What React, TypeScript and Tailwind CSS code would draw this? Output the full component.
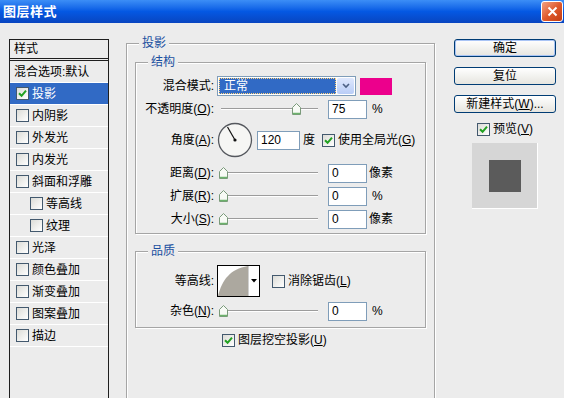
import { ReactNode } from 'react';

const font = "font-['Liberation_Sans','Noto_Sans_CJK_SC',sans-serif]";

function Check({ on }: { on?: boolean }) {
  return (
    <span className="inline-flex h-[13px] w-[13px] shrink-0 items-center justify-center border border-[#43596e] bg-linear-to-br from-[#dcdcd7] to-white">
      {on && (
        <svg width="9" height="9" viewBox="0 0 9 9">
          <path d="M1 4.2 L3.6 6.8 L8 1.6" stroke="#21a121" strokeWidth="2" fill="none" />
        </svg>
      )}
    </span>
  );
}

function Slider({ value }: { value: number }) {
  return (
    <div className="relative h-[20px] w-[108px]">
      <div className="absolute left-[4px] top-[9px] h-[2px] w-[97px] border-t border-[#9c9c9c] border-b border-b-white" />
      <svg
        className="absolute top-[4px]"
        style={{ left: 2 + value * 0.97 }}
        width="9"
        height="12"
        viewBox="0 0 9 12"
      >
        <path d="M4.5 0.5 L8.5 4.5 L8.5 11.5 L0.5 11.5 L0.5 4.5 Z" fill="#f7faf5" stroke="#7a9a7a" />
        <path d="M1 10.5 H8" stroke="#6cb26c" strokeWidth="1.5" />
      </svg>
    </div>
  );
}

function Field({ value, w = 39 }: { value: string; w?: number }) {
  return (
    <div
      className="flex h-[19px] items-center border border-[#7f9db9] bg-white pl-[3px] text-[12px]"
      style={{ width: w }}
    >
      {value}
    </div>
  );
}

function Label({ children }: { children: ReactNode }) {
  return <div className="w-[78px] shrink-0 text-right text-[12px] leading-none">{children}</div>;
}

function Group({ title, className, children }: { title: string; className: string; children: ReactNode }) {
  return (
    <div className={`relative border border-[#a5a5a5] shadow-[inset_1px_1px_0_#fff,1px_1px_0_#fff] ${className}`}>
      <span className="absolute -top-[9px] left-[12px] bg-[#ececec] px-[3px] text-[12px] leading-[16px] text-[#1a4f9f]">
        {title}
      </span>
      {children}
    </div>
  );
}

const styles = [
  { name: '内阴影' },
  { name: '外发光' },
  { name: '内发光' },
  { name: '斜面和浮雕' },
  { name: '等高线', indent: true },
  { name: '纹理', indent: true },
  { name: '光泽' },
  { name: '颜色叠加' },
  { name: '渐变叠加' },
  { name: '图案叠加' },
  { name: '描边' },
];

function XpButton({ children, def }: { children: ReactNode; def?: boolean }) {
  return (
    <div
      className={`flex h-[18px] w-[102px] items-center justify-center rounded-[3px] border border-[#003c74] bg-linear-to-b from-white to-[#e6e5df] text-[12px] ${
        def ? 'shadow-[inset_0_0_0_1px_#a9c4f5]' : ''
      }`}
    >
      {children}
    </div>
  );
}

export default function App() {
  return (
    <div className={`h-[398px] w-[564px] overflow-hidden bg-[#ececec] text-black [text-autospace:no-autospace] ${font}`}>
      {/* Title bar */}
      <div className="flex h-[23px] items-center justify-between bg-linear-to-b from-[#3c8ef6] via-[#0458e3] to-[#0845c0] pl-[3px] pr-[1px]">
        <span className="text-[13px] font-bold tracking-[0.5px] text-white">图层样式</span>
        <div className="flex h-[21px] w-[22px] items-center justify-center rounded-[3px] border border-white bg-linear-to-br from-[#f0a080] via-[#e05a2c] to-[#c33d12]">
          <svg width="11" height="11" viewBox="0 0 11 11">
            <path d="M1.5 1.5 L9.5 9.5 M9.5 1.5 L1.5 9.5" stroke="white" strokeWidth="2" />
          </svg>
        </div>
      </div>

      <div className="flex">
        {/* Style list */}
        <div className="ml-[9px] mt-[16px] h-[370px] w-[100px] shrink-0 border border-[#1e1e1e] text-[12px]">
          <div className="flex h-[21px] items-center border-b-[3px] border-double border-[#1e1e1e] pl-[4px]">样式</div>
          <div className="flex h-[22px] items-center border-b border-white pl-[4px]">混合选项:默认</div>
          <div className="flex h-[22px] items-center gap-[3px] border-b border-white bg-[#316ac5] pl-[6px] text-white">
            <Check on />
            投影
          </div>
          {styles.map((s) => (
            <div
              key={s.name}
              className={`flex h-[22px] items-center gap-[3px] border-b border-white ${s.indent ? 'pl-[20px]' : 'pl-[6px]'}`}
            >
              <Check />
              {s.name}
            </div>
          ))}
        </div>

        {/* Drop shadow group */}
        <Group title="投影" className="ml-[17px] mt-[20px] h-[400px] w-[309px] shrink-0">
          <Group title="结构" className="ml-[8px] mt-[18px] h-[172px] w-[291px]">
            <div className="pt-[13px]">
              <div className="flex h-[20px] items-center">
                <Label>混合模式:</Label>
                <div className="ml-[3px] flex h-[20px] w-[139px] items-center border border-[#7f9db9] bg-white p-[1px]">
                  <div className="flex h-full flex-1 items-center border border-dotted border-[#ffd27a] bg-[#316ac5] pl-[4px] text-[12px] text-white">
                    正常
                  </div>
                  <div className="ml-[1px] flex h-full w-[17px] items-center justify-center rounded-[2px] bg-linear-to-b from-[#dfe8fd] to-[#b9cdf7]">
                    <svg width="8" height="6" viewBox="0 0 8 6">
                      <path d="M1 1 L4 4 L7 1" stroke="#4d6185" strokeWidth="1.6" fill="none" />
                    </svg>
                  </div>
                </div>
                <div className="ml-[4px] h-[17px] w-[32px] bg-[#ec008c]" />
              </div>

              <div className="mt-[3px] flex h-[20px] items-center">
                <Label>
                  不透明度(<u>O</u>):
                </Label>
                <div className="ml-[3px]">
                  <Slider value={75} />
                </div>
                <div className="ml-[3px]">
                  <Field value="75" />
                </div>
                <span className="ml-[5px] text-[12px]">%</span>
              </div>

              <div className="mt-[3px] flex h-[36px] items-center">
                <Label>
                  角度(<u>A</u>):
                </Label>
                <svg className="ml-[3px]" width="36" height="36" viewBox="0 0 36 36">
                  <circle cx="18" cy="18" r="16.5" fill="#f6f6f4" stroke="#55585e" strokeWidth="1.3" />
                  <path d="M18 18 L10.5 5" stroke="#111" strokeWidth="1.2" />
                  <circle cx="18" cy="18" r="1.6" fill="#111" />
                </svg>
                <div className="ml-[4px]">
                  <Field value="120" w={43} />
                </div>
                <span className="ml-[3px] text-[12px]">度</span>
                <div className="ml-[7px] flex items-center gap-[3px] text-[12px]">
                  <Check on />
                  <span>
                    使用全局光(<u>G</u>)
                  </span>
                </div>
              </div>

              {[
                { l: '距离', k: 'D', u: '像素' },
                { l: '扩展', k: 'R', u: '%' },
                { l: '大小', k: 'S', u: '像素' },
              ].map((r, i) => (
                <div key={r.k} className={`flex h-[20px] items-center ${i === 0 ? 'mt-[5px]' : 'mt-[3px]'}`}>
                  <Label>
                    {r.l}(<u>{r.k}</u>):
                  </Label>
                  <div className="ml-[3px]">
                    <Slider value={0} />
                  </div>
                  <div className="ml-[3px]">
                    <Field value="0" />
                  </div>
                  <span className={`text-[12px] ${r.u === '%' ? 'ml-[5px]' : 'ml-[2px]'}`}>{r.u}</span>
                </div>
              ))}
            </div>
          </Group>

          <Group title="品质" className="ml-[8px] mt-[17px] h-[77px] w-[291px]">
            <div className="mt-[13px] flex h-[32px] items-center">
              <Label>等高线:</Label>
              <div className="ml-[3px] flex h-[32px] w-[43px] border border-black bg-white">
                <svg width="30" height="30" viewBox="0 0 30 30">
                  <path d="M0 30 C 4 14 12 3 30 0 L30 30 Z" fill="#aca89f" />
                </svg>
                <div className="flex flex-1 items-center justify-center border-l border-[#d0d0d0]">
                  <svg width="6" height="4" viewBox="0 0 6 4">
                    <path d="M0 0 H6 L3 3.5 Z" fill="#000" />
                  </svg>
                </div>
              </div>
              <div className="ml-[12px] flex items-center gap-[3px] text-[12px]">
                <Check />
                <span>
                  消除锯齿(<u>L</u>)
                </span>
              </div>
            </div>
            <div className="mt-[4px] flex h-[20px] items-center">
              <Label>
                杂色(<u>N</u>):
              </Label>
              <div className="ml-[3px]">
                <Slider value={0} />
              </div>
              <div className="ml-[3px]">
                <Field value="0" />
              </div>
              <span className="ml-[5px] text-[12px]">%</span>
            </div>
          </Group>

          <div className="mt-[4px] flex h-[16px] items-center gap-[3px] pl-[95px] text-[12px]">
            <Check on />
            <span>
              图层挖空投影(<u>U</u>)
            </span>
          </div>
        </Group>

        {/* Right buttons */}
        <div className="ml-[19px] mt-[16px] flex w-[102px] shrink-0 flex-col">
          <XpButton def>确定</XpButton>
          <div className="mt-[10px]">
            <XpButton>复位</XpButton>
          </div>
          <div className="mt-[10px]">
            <XpButton>
              <span>
                新建样式(<u>W</u>)...
              </span>
            </XpButton>
          </div>
          <div className="mt-[9px] flex h-[14px] items-center justify-center gap-[3px] text-[12px]">
            <Check on />
            <span>
              预览(<u>V</u>)
            </span>
          </div>
          <div className="mx-auto mt-[7px] flex h-[66px] w-[66px] items-center justify-center border-b border-r border-white bg-[#d6d6d6]">
            <div className="h-[32px] w-[32px] bg-[#5b5b5b]" />
          </div>
        </div>
      </div>
    </div>
  );
}
